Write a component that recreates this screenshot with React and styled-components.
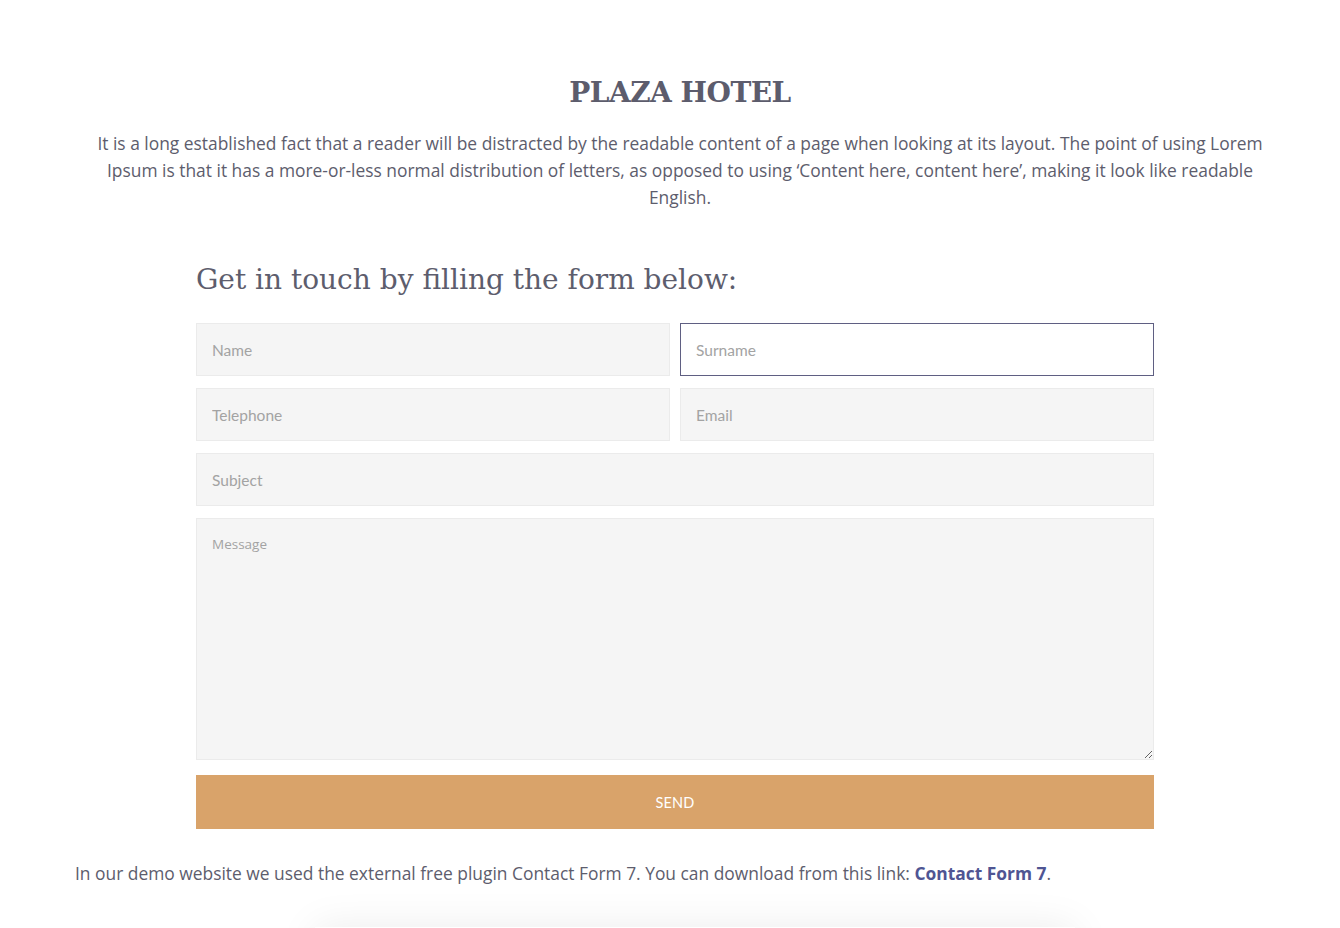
import styled, { createGlobalStyle } from 'styled-components';

const GlobalStyle = createGlobalStyle`
  html, body {
    margin: 0;
    padding: 0;
    background: #fff;
    overflow: hidden;
  }
  body {
    font-family: "Open Sans", "Noto Sans", sans-serif;
    color: #5d5d6d;
  }
  * { box-sizing: border-box; }
`;

const Page = styled.div`
  width: 1340px;
  height: 928px;
  overflow: hidden;
  padding: 72px 55px 0 75px;
`;

const Intro = styled.section`
  text-align: center;
`;

const Title = styled.h1`
  margin: 0;
  font-family: "DejaVu Serif", "Liberation Serif", serif;
  font-weight: bold;
  font-size: 28px;
  letter-spacing: -0.5px;
  line-height: 42px;
  color: #5c5c6c;
`;

const Lead = styled.p`
  margin: 16px 0 0;
  font-size: 17.4px;
  line-height: 27px;
  color: #5d5d6d;
`;

const FormWrap = styled.form`
  width: 958px;
  margin: 50px 0 0 121px;
`;

const FormTitle = styled.h2`
  margin: 0 0 24px;
  font-family: "DejaVu Serif", "Liberation Serif", serif;
  font-weight: normal;
  font-size: 28px;
  line-height: 38px;
  color: #5d5d6d;
`;

const Row = styled.div`
  display: grid;
  grid-template-columns: ${p => (p.$cols === 2 ? '1fr 1fr' : '1fr')};
  column-gap: 10px;
  margin-bottom: 12px;
`;

const Field = styled.input`
  display: block;
  width: 100%;
  height: 53px;
  padding: 0 15px;
  background: ${p => (p.$focused ? '#fff' : '#f5f5f5')};
  border: 1px solid ${p => (p.$focused ? '#5f5f82' : '#ebebeb')};
  font-family: "Lato", "Liberation Sans", sans-serif;
  font-size: 15.5px;
  color: #5d5d6d;
  outline: none;
  &::placeholder { color: #a3a3a3; }
`;

const Message = styled.textarea`
  display: block;
  width: 100%;
  height: 242px;
  padding: 16px 15px;
  background: #f5f5f5;
  border: 1px solid #ebebeb;
  font-family: "Open Sans", "Noto Sans", sans-serif;
  font-size: 13.5px;
  color: #5d5d6d;
  outline: none;
  resize: vertical;
  margin-bottom: 3px;
  &::placeholder { color: #a3a3a3; }
`;

const Send = styled.button`
  display: block;
  width: 100%;
  height: 54px;
  border: none;
  background: #d9a36a;
  color: #fff;
  font-family: "Lato", "Liberation Sans", sans-serif;
  font-size: 14.5px;
  letter-spacing: 0.2px;
  cursor: pointer;
`;

const Note = styled.p`
  margin: 31px 0 0;
  font-size: 17.4px;
  line-height: 27px;
  color: #5d5d6d;
  a {
    color: #4f5593;
    font-weight: bold;
    text-decoration: none;
  }
`;

const ShadowBox = styled.div`
  width: 760px;
  height: 80px;
  margin: 40px 0 0 240px;
  background: #fff;
  box-shadow: 0 0 40px rgba(0, 0, 0, 0.08);
`;

export default function App() {
  return (
    <>
      <GlobalStyle />
      <Page>
        <Intro>
          <Title>PLAZA HOTEL</Title>
          <Lead>
            It is a long established fact that a reader will be distracted by the readable content of a page when looking at its layout. The point of using Lorem Ipsum is that it has a more-or-less normal distribution of letters, as opposed to using ‘Content here, content here’, making it look like readable English.
          </Lead>
        </Intro>
        <FormWrap onSubmit={e => e.preventDefault()}>
          <FormTitle>Get in touch by filling the form below:</FormTitle>
          <Row $cols={2}>
            <Field placeholder="Name" />
            <Field placeholder="Surname" $focused />
          </Row>
          <Row $cols={2}>
            <Field placeholder="Telephone" />
            <Field placeholder="Email" />
          </Row>
          <Row>
            <Field placeholder="Subject" />
          </Row>
          <Row>
            <Message placeholder="Message" />
          </Row>
          <Send type="submit">SEND</Send>
        </FormWrap>
        <Note>
          In our demo website we used the external free plugin Contact Form 7. You can download from this link: <a href="#cf7">Contact Form 7</a>.
        </Note>
        <ShadowBox />
      </Page>
    </>
  );
}
